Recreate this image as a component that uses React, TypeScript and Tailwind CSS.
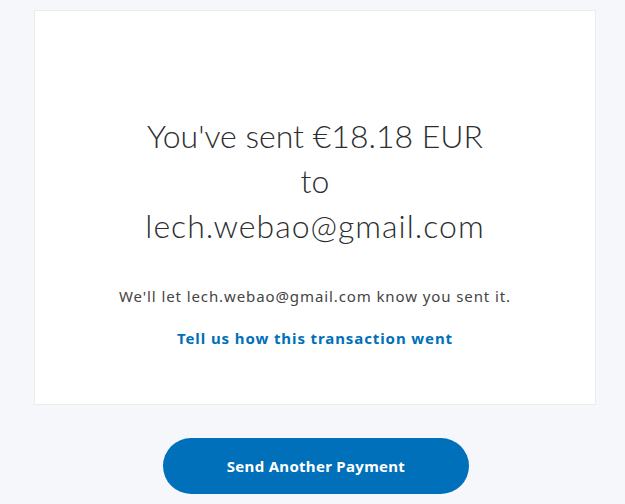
export default function App() {
  return (
    <div className="min-h-[504px] bg-[#f5f7fa] pl-[34px] pr-[29px] pt-[10px] font-['Noto_Sans',sans-serif]">
      <div className="flex h-[395px] flex-col items-center border border-[#eaeced] bg-white pt-[102px] text-center">
        <h1 className="font-['Lato','Noto_Sans',sans-serif] text-[32px] font-light leading-[45px] text-[#2c2e2f]">
          You've sent €18.18 EUR
          <br />
          to
          <br />
          <span className="tracking-[1px]">lech.webao@gmail.com</span>
        </h1>
        <p className="mt-[38px] text-[15px] leading-[20px] tracking-[0.9px] text-[#444444]">
          We'll let lech.webao@gmail.com know you sent it.
        </p>
        <a href="#" className="mt-[22px] text-[15px] font-bold leading-[20px] tracking-[0.9px] text-[#0070ba]">
          Tell us how this transaction went
        </a>
      </div>
      <div className="flex justify-center pl-[2px] pt-[33px]">
        <button className="h-[56px] w-[306px] rounded-full bg-[#0070ba] text-[15px] font-bold tracking-[0.3px] text-white">
          Send Another Payment
        </button>
      </div>
    </div>
  );
}
